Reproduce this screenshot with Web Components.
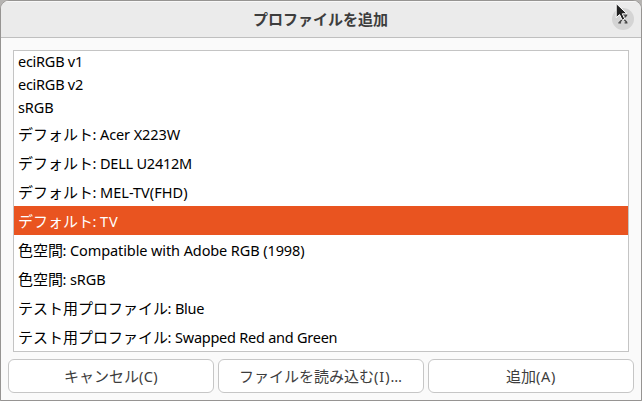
<!DOCTYPE html>
<html lang="ja"><head><meta charset="utf-8"><title>プロファイルを追加</title>
<style>html,body{margin:0;width:642px;height:401px;overflow:hidden;background:#b5b3b1}</style></head>
<body><profile-dialog></profile-dialog>
<script>
// A mixed label: Japanese on a 15px grid, Latin tracked to a given width.
class MixedText extends HTMLElement{
  connectedCallback(){
    const r=this.attachShadow({mode:'open'});
    r.innerHTML=`<style>:host{display:inline-flex;align-items:baseline;white-space:pre;font:15px/22px "Noto Sans CJK JP",sans-serif}
    .l{font-family:"Noto Sans","Noto Sans CJK JP",sans-serif;font-size:14.5px;display:inline-block}
    .c{width:7px;text-indent:-.6px}</style>`;
    const add=(t,c)=>{if(!t)return;const s=document.createElement('span');s.className=c;s.textContent=t;r.append(s);return s};
    add(this.getAttribute('ja'),'j');
    if(this.hasAttribute('colon'))add(': ','l c');
    const s=add(this.getAttribute('en'),'l'),w=+this.getAttribute('w');
    if(s&&w){const n=s.textContent.length,d=(w-s.getBoundingClientRect().width)/n;s.style.letterSpacing=d+'px';s.style.width=w+'px'}
  }
}
class CloseButton extends HTMLElement{
  connectedCallback(){this.attachShadow({mode:'open'}).innerHTML=`<style>:host{display:block;width:22px;height:22px;border-radius:50%;background:#d4d4d4}svg{display:block}</style>
  <svg width="22" height="22" viewBox="0 0 22 22"><path d="M10 7h5.2M14.8 7.3L7.5 14.3M9 8.5L14.8 14.3M6.3 14.8h2.8M12.6 14.8h2.9" fill="none" stroke="#444" stroke-width="1.3"/></svg>`}
}
class MousePointer extends HTMLElement{
  connectedCallback(){this.attachShadow({mode:'open'}).innerHTML=`<style>:host{display:block;position:absolute;left:614px;top:1px}svg{display:block}</style>
  <svg width="15" height="20" viewBox="0 0 15 20"><path d="M1.2 1.5L1.2 15.6L4.6 12.6L7.2 18.2L9.8 17L7.3 11.8L12 11.8Z" fill="#222" stroke="#fff" stroke-width="1"/></svg>`}
}
class ProfileRow extends HTMLElement{
  connectedCallback(){this.attachShadow({mode:'open'}).innerHTML=`<style>:host{display:flex;flex:none;align-items:center;height:29px;padding-left:4px;color:#000;box-sizing:border-box}
  :host([plain]){height:23px;padding-bottom:2px}:host([plain]:first-child){margin-top:-1px}:host([selected]){background:#e95420;color:#fff}</style><slot></slot>`}
}
class ProfileList extends HTMLElement{
  connectedCallback(){this.attachShadow({mode:'open'}).innerHTML=`<style>:host{display:flex;flex-direction:column;box-sizing:border-box;height:302px;margin:0 12px;border:1px solid #c4c4c4;background:#fff;overflow:hidden}</style><slot></slot>`}
}
class ActionButton extends HTMLElement{
  connectedCallback(){this.attachShadow({mode:'open'}).innerHTML=`<style>:host{display:flex;box-sizing:border-box;align-items:center;justify-content:center;height:34px;border:1px solid #c6c6c6;border-radius:6px;background:#fff;color:#3d3d3d}</style><slot></slot>`}
}
class ProfileDialog extends HTMLElement{
  connectedCallback(){this.attachShadow({mode:'open'}).innerHTML=`<style>
  :host{display:block;position:relative;box-sizing:border-box;width:642px;height:401px;border:1px solid #969492;border-radius:9px 9px 0 0;background:#fafafa;overflow:hidden}
  header{display:grid;grid-template-columns:1fr auto 1fr;align-items:center;height:37px;box-sizing:border-box;background:#ebebeb;border-bottom:1px solid #bfbfbf;box-shadow:inset 0 1px #f8f8f8;color:#3d3d3d;margin-bottom:12px}
  h1{margin:0;padding-right:1px;grid-column:2;font:bold 15px/22px "Noto Sans CJK JP",sans-serif}
  close-button{justify-self:end;margin-right:7px}
  footer{display:grid;grid-template-columns:206px 206px 206px;gap:4px;padding:7px 7px 0}
  </style>
  <header><h1>プロファイルを追加</h1><close-button></close-button></header>
  <profile-list>
  <profile-row plain><mixed-text en="eciRGB v1" w="65"></mixed-text></profile-row>
  <profile-row plain><mixed-text en="eciRGB v2" w="65"></mixed-text></profile-row>
  <profile-row plain><mixed-text en="sRGB" w="35.5"></mixed-text></profile-row>
  <profile-row><mixed-text ja="デフォルト" colon en="Acer X223W" w="80"></mixed-text></profile-row>
  <profile-row><mixed-text ja="デフォルト" colon en="DELL U2412M" w="92"></mixed-text></profile-row>
  <profile-row><mixed-text ja="デフォルト" colon en="MEL-TV(FHD)" w="87.5"></mixed-text></profile-row>
  <profile-row selected><mixed-text ja="デフォルト" colon en="TV" w="18.5"></mixed-text></profile-row>
  <profile-row><mixed-text ja="色空間" colon en="Compatible with Adobe RGB (1998)" w="234.5"></mixed-text></profile-row>
  <profile-row><mixed-text ja="色空間" colon en="sRGB" w="35.5"></mixed-text></profile-row>
  <profile-row><mixed-text ja="テスト用プロファイル" colon en="Blue" w="29"></mixed-text></profile-row>
  <profile-row><mixed-text ja="テスト用プロファイル" colon en="Swapped Red and Green" w="162.3"></mixed-text></profile-row>
  </profile-list>
  <footer>
  <action-button><mixed-text ja="キャンセル" en="(C)" w="19"></mixed-text></action-button>
  <action-button><mixed-text ja="ファイルを読み込む" en="(I)…" w="29"></mixed-text></action-button>
  <action-button><mixed-text ja="追加" en="(A)" w="20"></mixed-text></action-button>
  </footer><mouse-pointer></mouse-pointer>`}
}
for(const [n,c] of [['mixed-text',MixedText],['close-button',CloseButton],['mouse-pointer',MousePointer],['profile-row',ProfileRow],['profile-list',ProfileList],['action-button',ActionButton],['profile-dialog',ProfileDialog]])customElements.define(n,c);
</script></body></html>
